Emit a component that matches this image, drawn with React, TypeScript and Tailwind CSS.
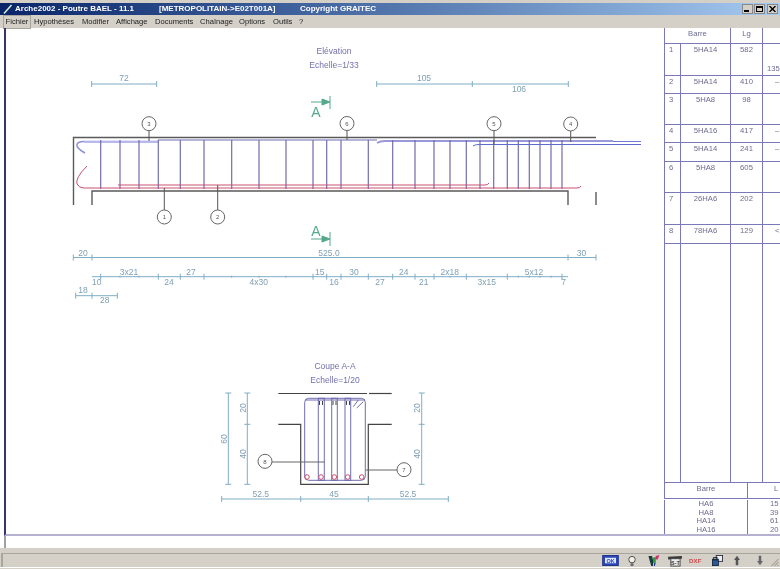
const menu = [
  ["Fichier", "w-[28px] ml-[3px] border border-[#a8a59c] text-center"],
  ["Hypothèses", "ml-[3px] w-[48px]"],
  ["Modifier", "w-[34px]"],
  ["Affichage", "w-[39px]"],
  ["Documents", "w-[45px]"],
  ["Chaînage", "w-[39px]"],
  ["Options", "w-[34px]"],
  ["Outils", "w-[26px]"],
  ["?", "w-[10px]"],
];

const rows = [
  { h: "h-[32px]", n: "1", b: "5HA14", l: "582", x: "135", c: "items-end pl-[4px]" },
  { h: "h-[18px]", n: "2", b: "5HA14", l: "410", x: "–", c: "pl-[12px]" },
  { h: "h-[31px]", n: "3", b: "5HA8", l: "98", x: "", c: "" },
  { h: "h-[18px]", n: "4", b: "5HA16", l: "417", x: "–", c: "pl-[12px]" },
  { h: "h-[19px]", n: "5", b: "5HA14", l: "241", x: "–", c: "pl-[12px]" },
  { h: "h-[31px]", n: "6", b: "5HA8", l: "605", x: "", c: "" },
  { h: "h-[32px]", n: "7", b: "26HA6", l: "202", x: "", c: "" },
  { h: "h-[19px]", n: "8", b: "78HA6", l: "129", x: "<", c: "pl-[12px]" },
  { h: "h-[239px]", n: "", b: "", l: "", x: "", c: "" },
];

const dim = "#7fadc6";
const dimText = "#7f9fb4";
const steel = "#6f6cb0";
const red = "#c8506e";
const green = "#55a88a";
const black = "#5a5a5a";

const stirrups = [100.7, 120, 139, 158.3, 180.3, 204, 231.7, 259, 286, 313, 326.7, 341, 368.3, 392.7, 415, 434, 450, 466.3, 480, 493.7, 507.3, 518.3, 529.3, 540, 551, 562];

const bubbles: [number, number, string, number][] = [
  [149, 123.7, "3", 141],
  [347, 123.5, "6", 140],
  [494, 123.7, "5", 145],
  [570.7, 124, "4", 142],
  [164.3, 217, "1", 188],
  [217.7, 217, "2", 185],
];

const row2Major = [100.7, 158.3, 180.3, 204, 313, 326.7, 341, 368.3, 392.7, 415, 434, 466.3, 507.3, 562];
const row2Minor = [120, 139, 231.7, 259, 286, 450, 518.3, 529.3, 540, 551];

const labels: [number, number, string][] = [
  [124, 81, "72"], [424, 81, "105"], [519, 92, "106"],
  [83, 255.5, "20"], [329, 255.5, "525.0"], [581.6, 255.5, "30"],
  [96.7, 284.5, "10"], [129, 274.5, "3x21"], [169, 284.5, "24"], [191, 274.5, "27"], [258.7, 284.5, "4x30"],
  [319.7, 274.5, "15"], [334, 284.5, "16"], [354, 274.5, "30"], [380, 284.5, "27"], [403.7, 274.5, "24"],
  [423.7, 284.5, "21"], [449.7, 274.5, "2x18"], [486.7, 284.5, "3x15"], [534, 274.5, "5x12"], [563.7, 284.5, "7"],
  [83, 293, "18"], [104.7, 303, "28"],
  [260.7, 496.5, "52.5"], [334, 496.5, "45"], [408, 496.5, "52.5"],
];

const vLabels: [number, number, string][] = [
  [227, 439, "60"], [246, 408, "20"], [246, 454, "40"], [420, 408, "20"], [420, 454, "40"],
];

const HTicks = ({ y, xs, s = 3 }: { y: number; xs: number[]; s?: number }) => (
  <>
    {xs.map((x) => (
      <line key={x} x1={x} x2={x} y1={y - s} y2={y + s} stroke={dim} strokeWidth="1" />
    ))}
  </>
);

const VDim = ({ x, ys }: { x: number; ys: number[] }) => (
  <>
    <line x1={x} x2={x} y1={ys[0]} y2={ys[ys.length - 1]} stroke={dim} />
    {ys.map((y) => (
      <line key={y} x1={x - 3} x2={x + 3} y1={y} y2={y} stroke={dim} />
    ))}
  </>
);

function Drawing() {
  return (
    <svg width="658" height="506" viewBox="6 28 658 506" className="block" style={{ fontFamily: "'Liberation Sans', sans-serif" }}>
      {/* titles */}
      <g fill="#7270ad" fontSize="8.5" textAnchor="middle">
        <text x="334" y="54">Elévation</text>
        <text x="334" y="68">Echelle=1/33</text>
        <text x="335" y="369">Coupe A-A</text>
        <text x="335" y="383">Echelle=1/20</text>
      </g>

      {/* elevation top bars */}
      <line x1="158" x2="377" y1="140" y2="140" stroke={steel} />
      <path d="M158 141.5 L83 141.5 Q76 142 77 146 Q78 149 85 153" fill="none" stroke="#8f8fdc" strokeWidth="1.6" />
      <line x1="84" x2="158" y1="142" y2="142" stroke="#b8b8ea" strokeWidth="2" />
      <path d="M377 143 Q380 141 385 141 L613 141" fill="none" stroke="#9a98d8" strokeWidth="2" />
      <line x1="613" x2="641" y1="141.5" y2="141.5" stroke="#6f7ad8" />
      <path d="M473 146 Q475 144.5 479 144.5 L641 144.5" fill="none" stroke="#5f6ad0" />

      {/* stirrups */}
      {stirrups.map((x) => (
        <line key={x} x1={x} x2={x} y1="140" y2="189" stroke={steel} strokeWidth="1.2" />
      ))}

      {/* bottom bars */}
      <path d="M118 185 L485 185 Q488 185 489 183" fill="none" stroke={red} />
      <path d="M87 166 Q75 178 77 184 Q79 188 84 188 L577 188 Q580 188 581 186" fill="none" stroke={red} />

      {/* concrete */}
      <g fill="none" stroke={black} strokeWidth="1.4">
        <path d="M73.5 205 L73.5 137.5 L596 137.5" />
        <path d="M92 205 L92 191 L568 191 L568 205" />
        <line x1="596" x2="596" y1="192" y2="205" />
      </g>

      {/* bubbles */}
      {bubbles.map(([x, y, t, to]) => (
        <g key={t}>
          <line x1={x} x2={x} y1={y} y2={to} stroke="#555" />
          <circle cx={x} cy={y} r="7" fill="#fff" stroke="#666" />
          <text x={x} y={y + 2} fontSize="6" textAnchor="middle" fill="#555">{t}</text>
        </g>
      ))}

      {/* section marks */}
      <g stroke={green} fill={green}>
        <line x1="311" x2="325" y1="102" y2="102" />
        <path d="M322 99 L330 102 L322 105 Z" />
        <line x1="330" x2="330" y1="96" y2="109" />
        <line x1="311" x2="325" y1="239" y2="239" />
        <path d="M322 236 L330 239 L322 242 Z" />
        <line x1="330" x2="330" y1="232" y2="246" />
      </g>
      <g fill={green} fontSize="14" textAnchor="middle">
        <text x="316" y="116.5">A</text>
        <text x="316" y="236">A</text>
      </g>

      {/* elevation dimensions */}
      <g stroke={dim}>
        <line x1="91.7" x2="156.7" y1="84" y2="84" />
        <line x1="376.7" x2="568.3" y1="84" y2="84" />
        <line x1="73.3" x2="596" y1="257.5" y2="257.5" />
        <line x1="92" x2="568" y1="276.7" y2="276.7" />
        <line x1="75.7" x2="117.3" y1="295.7" y2="295.7" />
      </g>
      <HTicks y={84} xs={[91.7, 156.7, 376.7, 472.3, 568.3]} />
      <HTicks y={257.5} xs={[73.3, 92, 568, 596]} />
      <HTicks y={276.7} xs={row2Major} />
      <HTicks y={276.7} xs={row2Minor} s={1} />
      <HTicks y={295.7} xs={[75.7, 92, 117.3]} />

      <g fill={dimText} fontSize="8.5" textAnchor="middle">
        {labels.map(([x, y, t], i) => (
          <text key={i} x={x} y={y}>{t}</text>
        ))}
        {vLabels.map(([x, y, t], i) => (
          <text key={i} x={x} y={y} transform={`rotate(-90 ${x} ${y})`}>{t}</text>
        ))}
      </g>

      {/* section concrete */}
      <g fill="none" stroke="#444" strokeWidth="1.2">
        <line x1="278.3" x2="367" y1="393.5" y2="393.5" />
        <line x1="369" x2="391.7" y1="393.5" y2="393.5" />
        <path d="M278.3 424.3 L300.7 424.3 L300.7 484.3 L368.3 484.3 L368.3 424.3 L391.7 424.3" />
      </g>

      {/* section steel */}
      <g fill="none" stroke={steel}>
        <rect x="304.7" y="398.3" width="60.6" height="82" rx="4" />
        <line x1="305" x2="365" y1="400" y2="400" />
        <rect x="318.3" y="398.3" width="6" height="82" />
        <rect x="331.7" y="398.3" width="5.6" height="82" />
        <rect x="345" y="398.3" width="5.7" height="82" />
        <line x1="353.3" x2="358.3" y1="406.7" y2="400" />
        <line x1="356.7" x2="363.3" y1="408" y2="401.7" />
      </g>
      <g fill="none" stroke="#444">
        <path d="M319.5 401 V405 M322.5 401 V405 M333 401 V405 M336 401 V405 M346.5 401 V405 M349.5 401 V405" />
      </g>
      <g fill="none" stroke={red} strokeWidth="1">
        {[307, 321, 334.3, 347.7, 361.7].map((x) => (
          <circle key={x} cx={x} cy="477" r="2.3" />
        ))}
      </g>

      {/* section bubbles */}
      <line x1="265" x2="324.3" y1="462" y2="462" stroke="#666" />
      <circle cx="265" cy="461.3" r="7" fill="#fff" stroke="#666" />
      <text x="265" y="463.5" fontSize="6" textAnchor="middle" fill="#555">8</text>
      <line x1="365.7" x2="404" y1="470" y2="470" stroke="#666" />
      <circle cx="404" cy="469.7" r="7" fill="#fff" stroke="#666" />
      <text x="404" y="472" fontSize="6" textAnchor="middle" fill="#555">7</text>

      {/* section dimensions */}
      <VDim x={228.3} ys={[393, 484.3]} />
      <VDim x={247.3} ys={[393, 424.3, 484.3]} />
      <VDim x={421.7} ys={[393, 424.3, 484.3]} />
      <line x1="221.7" x2="448.3" y1="499" y2="499" stroke={dim} />
      <HTicks y={499} xs={[221.7, 300.7, 368.3, 448.3]} />
    </svg>
  );
}

function BarTable() {
  const cell = "border-l border-[#7a78b8]";
  return (
    <div className="w-[116px] h-[506px] overflow-hidden flex flex-col text-[7.7px] leading-[12px] text-[#6e6c92]">
      <div className="h-[16px] shrink-0 grid grid-cols-[66px_32px_18px] border-b border-[#7a78b8]">
        <div className={`${cell} text-center`}>Barre</div>
        <div className={`${cell} text-center`}>Lg</div>
        <div className={cell} />
      </div>
      {rows.map((r, i) => (
        <div key={i} className={`${r.h} shrink-0 grid grid-cols-[16px_50px_32px_18px] border-b border-[#7a78b8]`}>
          <div className={`${cell} pl-[4px]`}>{r.n}</div>
          <div className={`${cell} text-center`}>{r.b}</div>
          <div className={`${cell} text-center`}>{r.l}</div>
          <div className={`${cell} flex ${r.c}`}>{r.x}</div>
        </div>
      ))}
      <div className="h-[16px] shrink-0 grid grid-cols-[83px_33px] border-b border-[#7a78b8]">
        <div className={`${cell} text-center`}>Barre</div>
        <div className={`${cell} pl-[26px]`}>L</div>
      </div>
      <div className="flex-1 grid grid-cols-[83px_33px] leading-[8.5px] pt-[1px]">
        <div className={`${cell} text-center`}>
          <div>HA6</div>
          <div>HA8</div>
          <div>HA14</div>
          <div>HA16</div>
        </div>
        <div className={`${cell} pl-[22px] whitespace-nowrap`}>
          <div>15</div>
          <div>39</div>
          <div>61</div>
          <div>20</div>
        </div>
      </div>
    </div>
  );
}

function StatusIcons() {
  return (
    <div className="flex items-center h-[13px]">
      <svg width="17" height="11" viewBox="0 0 18 12" className="mr-[8px]">
        <rect x="0.5" y="0.5" width="17" height="11" fill="#2a46b8" stroke="#1c2f80" />
        <rect x="3" y="3" width="12" height="6" fill="#dfe6ff" />
        <text x="9" y="8.5" fontSize="6" fontWeight="700" textAnchor="middle" fill="#2a46b8">OK</text>
      </svg>
      <svg width="10" height="12" viewBox="0 0 10 13" className="mr-[10px]">
        <circle cx="5" cy="5" r="3.5" fill="#f4f2e6" stroke="#444" />
        <rect x="3.5" y="9" width="3" height="3" fill="#666" />
      </svg>
      <svg width="13" height="12" viewBox="0 0 13 13" className="mr-[7px]">
        <path d="M1 1 L5 1 L6 6 L6 12 L4 12 Z" fill="#1c3c3c" />
        <path d="M6 3 L9 2 L9 8 L6 9 Z" fill="#2c9a40" />
        <path d="M9 1 L13 0 L11 5 L9 5 Z" fill="#d03070" />
        <path d="M7 9 L9 8 L8 12 L7 12 Z" fill="#2040a0" />
      </svg>
      <svg width="16" height="12" viewBox="0 0 15 13" className="mr-[6px]">
        <path d="M0 2 L15 1 L15 4 L0 5 Z" fill="#3a3a3a" />
        <rect x="3" y="4" width="10" height="8" fill="#eee" stroke="#444" />
        <text x="8" y="11" fontSize="6" fontWeight="700" textAnchor="middle" fill="#333">S-T</text>
      </svg>
      <span className="w-[13px] mr-[10px] text-[6px] leading-[10px] font-bold text-[#d04848] tracking-[0.2px]">DXF</span>
      <svg width="11" height="11" viewBox="0 0 13 13" className="mr-[10px]">
        <rect x="5" y="0.5" width="7.5" height="7" fill="#eee" stroke="#223" />
        <rect x="0.5" y="5" width="7" height="7.5" fill="#2a5a9a" stroke="#123" />
        <rect x="2" y="3" width="4" height="3" fill="none" stroke="#123" />
      </svg>
      <svg width="8" height="11" viewBox="0 0 9 13" className="mr-[15px]">
        <path d="M4.5 1 L8 6 L6 6 L6 12 L3 12 L3 6 L1 6 Z" fill="#555" />
      </svg>
      <svg width="8" height="11" viewBox="0 0 9 13" className="mr-[6px]">
        <path d="M4.5 12 L8 7 L6 7 L6 1 L3 1 L3 7 L1 7 Z" fill="#666" />
      </svg>
      <svg width="9" height="10" viewBox="0 0 8 10" className="mr-[1px]">
        <path d="M1 10 L8 3 M4 10 L8 6 M7 10 L8 9" stroke="#908c84" fill="none" />
      </svg>
    </div>
  );
}

export default function App() {
  return (
    <div className="w-[780px] h-[569px] flex flex-col overflow-hidden bg-white font-['Liberation_Sans',sans-serif] blur-[0.3px]">
      <div className="h-[3px] shrink-0 bg-[#d4d0c8]" />
      {/* title bar */}
      <div className="h-[12px] shrink-0 flex items-center bg-gradient-to-r from-[#0a246a] to-[#a6caf0] text-white text-[8px] font-bold whitespace-nowrap">
        <svg width="10" height="10" viewBox="0 0 10 10" className="ml-[3px] mr-[2px]">
          <path d="M1 9.5 L8.5 1" stroke="#d8f0d8" strokeWidth="1.5" />
        </svg>
        <span className="w-[144px]">Arche2002 - Poutre BAEL - 11.1</span>
        <span className="w-[141px]">[METROPOLITAIN-&gt;E02T001A]</span>
        <span>Copyright GRAITEC</span>
        <div className="ml-auto mr-[2px] flex gap-[1px]">
          <div className="w-[11px] h-[10px] bg-[#d4d0c8] border border-[#8a8a8a] flex items-end pl-[1px] pb-[1px]">
            <div className="w-[5px] h-[2px] bg-black" />
          </div>
          <div className="w-[11px] h-[10px] bg-[#d4d0c8] border border-[#8a8a8a] mr-[1px] p-[1px]">
            <div className="w-full h-full border border-black border-t-2" />
          </div>
          <div className="w-[11px] h-[10px] bg-[#d4d0c8] border border-[#8a8a8a] flex items-center justify-center">
            <svg width="7" height="6" viewBox="0 0 7 6">
              <path d="M0.5 0 L6.5 6 M6.5 0 L0.5 6" stroke="#000" strokeWidth="1.4" />
            </svg>
          </div>
        </div>
      </div>
      {/* menu */}
      <div className="h-[13px] shrink-0 flex items-center bg-[#d4d0c8] text-[7.6px] leading-[12px] text-[#222]">
        {menu.map(([t, c]) => (
          <span key={t} className={`${c} whitespace-nowrap`}>{t}</span>
        ))}
      </div>
      {/* workspace */}
      <div className="flex-1 pl-[4px] flex flex-col">
        <div className="h-[508px] shrink-0 flex border-l-2 border-l-[#36366e] border-b-2 border-b-[#b4b0d0]">
          <div className="w-[658px] h-[506px] overflow-hidden">
            <Drawing />
          </div>
          <BarTable />
        </div>
        <div className="flex-1 border-l-2 border-l-[#a0a0a0]" />
      </div>
      {/* status bar */}
      <div className="h-[21px] shrink-0 bg-[#d4d0c8] pt-[5px] flex flex-col">
        <div className="h-[14px] flex items-center justify-end border-t border-t-[#a8a59c] border-l-2 border-l-[#a8a59c] ml-[1px]">
          <StatusIcons />
        </div>
        <div className="h-[1px] bg-white" />
      </div>
    </div>
  );
}
